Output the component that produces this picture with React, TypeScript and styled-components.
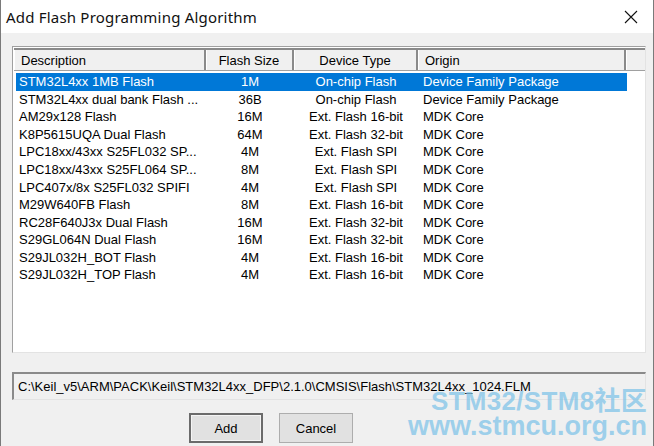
import React from "react";
import styled, { createGlobalStyle, css } from "styled-components";

type Algo = {
  name: string;
  size: string;
  type: string;
  origin: string;
};

const ALGOS: Algo[] = [
  { name: "STM32L4xx 1MB Flash", size: "1M", type: "On-chip Flash", origin: "Device Family Package" },
  { name: "STM32L4xx dual bank Flash ...", size: "36B", type: "On-chip Flash", origin: "Device Family Package" },
  { name: "AM29x128 Flash", size: "16M", type: "Ext. Flash 16-bit", origin: "MDK Core" },
  { name: "K8P5615UQA Dual Flash", size: "64M", type: "Ext. Flash 32-bit", origin: "MDK Core" },
  { name: "LPC18xx/43xx S25FL032 SP...", size: "4M", type: "Ext. Flash SPI", origin: "MDK Core" },
  { name: "LPC18xx/43xx S25FL064 SP...", size: "8M", type: "Ext. Flash SPI", origin: "MDK Core" },
  { name: "LPC407x/8x S25FL032 SPIFI", size: "4M", type: "Ext. Flash SPI", origin: "MDK Core" },
  { name: "M29W640FB Flash", size: "8M", type: "Ext. Flash 16-bit", origin: "MDK Core" },
  { name: "RC28F640J3x Dual Flash", size: "16M", type: "Ext. Flash 32-bit", origin: "MDK Core" },
  { name: "S29GL064N Dual Flash", size: "16M", type: "Ext. Flash 32-bit", origin: "MDK Core" },
  { name: "S29JL032H_BOT Flash", size: "4M", type: "Ext. Flash 16-bit", origin: "MDK Core" },
  { name: "S29JL032H_TOP Flash", size: "4M", type: "Ext. Flash 16-bit", origin: "MDK Core" },
];

const FLM_PATH =
  "C:\\Keil_v5\\ARM\\PACK\\Keil\\STM32L4xx_DFP\\2.1.0\\CMSIS\\Flash\\STM32L4xx_1024.FLM";

const COLUMNS = "192px 88px 124px 208px 1fr";

const GlobalStyle = createGlobalStyle`
  html, body {
    margin: 0;
    padding: 0;
    background: #f0f0f0;
  }
  * {
    box-sizing: border-box;
  }
`;

const AddAlgorithmDialog = () => {
  return (
    <Window>
      <TitleBar>
        <Title>Add Flash Programming Algorithm</Title>
        <CloseButton>
          <svg width="14" height="14" viewBox="0 0 14 14">
            <path d="M1 1 L13 13 M13 1 L1 13" stroke="#111" strokeWidth="1.1" fill="none" />
          </svg>
        </CloseButton>
      </TitleBar>

      <Body>
        <ListBox>
          <HeaderRow>
            <HeaderCell>Description</HeaderCell>
            <HeaderCell $align="center">Flash Size</HeaderCell>
            <HeaderCell $align="center">Device Type</HeaderCell>
            <HeaderCell>Origin</HeaderCell>
            <HeaderCell $filler />
          </HeaderRow>
          <Rows>
            {ALGOS.map((algo, i) => (
              <Row key={algo.name} $selected={i === 0}>
                <Cell $tight>{algo.name}</Cell>
                <Cell $align="center">{algo.size}</Cell>
                <Cell $align="center">{algo.type}</Cell>
                <Cell>{algo.origin}</Cell>
              </Row>
            ))}
          </Rows>
        </ListBox>

        <PathBox>{FLM_PATH}</PathBox>

        <ButtonRow>
          <DialogButton $default>Add</DialogButton>
          <DialogButton>Cancel</DialogButton>
        </ButtonRow>
      </Body>

      <Watermark>
        <WatermarkTitle>STM32/STM8社区</WatermarkTitle>
        <WatermarkUrl>www.stmcu.org.cn</WatermarkUrl>
      </Watermark>
    </Window>
  );
};

const Window = styled.div`
  position: relative;
  width: 654px;
  height: 446px;
  overflow: hidden;
  background: #f0f0f0;
  border-left: 1px solid #7a7a7a;
  border-right: 1px solid #7a7a7a;
  font-family: "Liberation Sans", Arial, sans-serif;
  font-size: 13px;
  color: #000;
`;

const TitleBar = styled.div`
  height: 33px;
  background: #fff;
  display: flex;
  align-items: center;
  justify-content: space-between;
  padding: 0 15px 0 5px;
`;

const Title = styled.span`
  font-family: "Noto Sans", "Liberation Sans", sans-serif;
  font-size: 15px;
  letter-spacing: 0.2px;
  color: #111;
`;

const CloseButton = styled.span`
  display: flex;
  align-items: center;
`;

const Body = styled.div`
  padding: 13px 7px 0 11px;
`;

const ListBox = styled.div`
  height: 307px;
  background: #fff;
  border-top: 1px solid #a0a0a0;
  border-left: 1px solid #a0a0a0;
  border-right: 1px solid #e3e3e3;
  border-bottom: 1px solid #e3e3e3;
  padding: 1px 0 0 1px;
`;

const HeaderRow = styled.div`
  display: grid;
  grid-template-columns: ${COLUMNS};
  height: 23px;
  background: #f0f0f0;
  border-top: 2px solid #8a8a8a;
  border-bottom: 1px solid #a0a0a0;
`;

const HeaderCell = styled.div<{ $align?: "left" | "center"; $filler?: boolean }>`
  display: flex;
  align-items: center;
  justify-content: ${({ $align }) => ($align === "center" ? "center" : "flex-start")};
  padding: 0 7px;
  border-right: 2px solid #8a8a8a;
  box-shadow: inset 1px 0 0 #fff;
  ${({ $filler }) =>
    $filler &&
    css`
      border-right: none;
    `}
`;

const Rows = styled.div`
  padding: 2px 18px 0 2px;
`;

const Row = styled.div<{ $selected?: boolean }>`
  display: grid;
  grid-template-columns: 190px 88px 124px 208px;
  height: 17.55px;
  align-items: center;
  background: ${({ $selected }) => ($selected ? "#0078d7" : "transparent")};
  color: ${({ $selected }) => ($selected ? "#fff" : "#000")};
`;

const Cell = styled.div<{ $align?: "left" | "center"; $tight?: boolean }>`
  text-align: ${({ $align }) => ($align === "center" ? "center" : "left")};
  padding: 0 ${({ $tight }) => ($tight ? "3px" : "5px")};
  white-space: nowrap;
  overflow: hidden;
`;

const PathBox = styled.div`
  margin-top: 19px;
  height: 28px;
  display: flex;
  align-items: center;
  padding-left: 4px;
  background: #f0f0f0;
  border-top: 2px solid #8a8a8a;
  border-left: 2px solid #8a8a8a;
  border-right: 1px solid #e3e3e3;
  border-bottom: 1px solid #e3e3e3;
`;

const ButtonRow = styled.div`
  display: flex;
  gap: 16px;
  margin-top: 13px;
  padding-left: 177px;
`;

const DialogButton = styled.button<{ $default?: boolean }>`
  width: 74px;
  height: 30px;
  font-family: "Liberation Sans", Arial, sans-serif;
  font-size: 13px;
  color: #000;
  background: #e1e1e1;
  border: 1px solid #adadad;
  padding: 0;
  ${({ $default }) =>
    $default &&
    css`
      border: 2px solid #6b6b6b;
      box-shadow: inset 0 0 0 1px #f4f4f4;
    `}
`;

/* site stamp laid over the lower-right corner */
const Watermark = styled.div`
  position: absolute;
  left: 418px;
  top: 389px;
  display: flex;
  flex-direction: column;
  align-items: flex-end;
  width: 228px;
  color: rgba(130, 196, 232, 0.75);
  font-weight: bold;
  pointer-events: none;
`;

const WatermarkTitle = styled.div`
  font-family: "Liberation Sans", "Noto Sans CJK SC", sans-serif;
  font-size: 26px;
  line-height: 24px;
  letter-spacing: 0.3px;
`;

const WatermarkUrl = styled.div`
  font-family: "Liberation Sans", sans-serif;
  font-size: 27px;
  line-height: 26px;
`;

const App = () => (
  <>
    <GlobalStyle />
    <AddAlgorithmDialog />
  </>
);

export default App;
